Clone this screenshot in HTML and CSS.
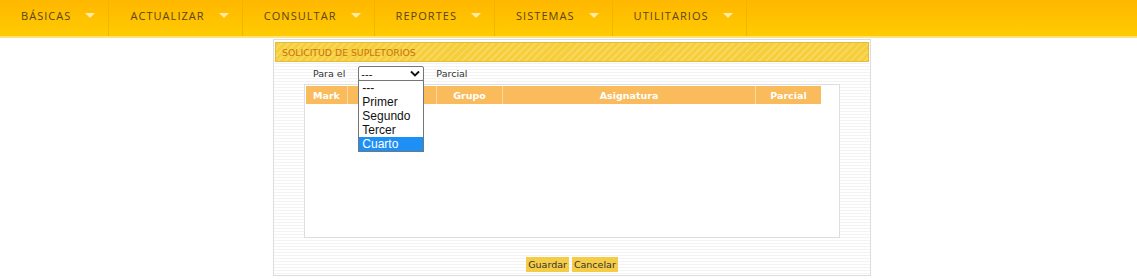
FILE: index.html
```html
<!DOCTYPE html>
<html lang="es">
<head>
    <meta charset="UTF-8">
    <meta name="viewport" content="width=device-width, initial-scale=1.0">
    <title>Solicitud de supletorios</title>
    <link rel="stylesheet" href="styles.css">
</head>
<body>
    <!-- Menu principal -->
    <ul class="menu">
        <li class="menu-item">BÁSICAS <span class="arrow"></span></li>
        <li class="menu-item">ACTUALIZAR <span class="arrow"></span></li>
        <li class="menu-item">CONSULTAR <span class="arrow"></span></li>
        <li class="menu-item">REPORTES <span class="arrow"></span></li>
        <li class="menu-item">SISTEMAS <span class="arrow"></span></li>
        <li class="menu-item">UTILITARIOS <span class="arrow"></span></li>
    </ul>

    <div class="panel">
        <div class="panel-title">SOLICITUD DE SUPLETORIOS</div>

        <div class="filter-row">
            <span class="filter-label">Para el</span>
            <div class="fake-select">
                <span>---</span>
                <svg class="chevron" width="10" height="7" viewBox="0 0 10 7">
                    <path d="M1 1.5 L5 5.5 L9 1.5" fill="none" stroke="#111" stroke-width="1.8"/>
                </svg>
                <ul class="select-list">
                    <li>---</li>
                    <li>Primer</li>
                    <li>Segundo</li>
                    <li>Tercer</li>
                    <li class="selected">Cuarto</li>
                </ul>
            </div>
            <span class="filter-label">Parcial</span>
        </div>

        <div class="grid-box">
            <table class="grid">
                <thead>
                    <tr>
                        <th class="col-mark">Mark</th>
                        <th class="col-curso"></th>
                        <th class="col-grupo">Grupo</th>
                        <th class="col-asig">Asignatura</th>
                        <th class="col-parcial">Parcial</th>
                    </tr>
                </thead>
                <tbody></tbody>
            </table>
        </div>

        <div class="actions">
            <button type="button" class="btn">Guardar</button>
            <button type="button" class="btn">Cancelar</button>
        </div>
    </div>
</body>
</html>
```

FILE: styles.css
```css
/* General */
body {
    margin: 0;
    padding: 0;
    background-color: #fff;
    font-family: "DejaVu Sans", Verdana, sans-serif;
    color: #333;
}

/* Menu */
.menu {
    list-style: none;
    margin: 0;
    padding: 0;
    display: flex;
    height: 36px;
    background: linear-gradient(to bottom, #ffb700, #ffcb00);
    border-bottom: 2px solid #ffe27a;
}

.menu-item {
    display: flex;
    align-items: center;
    padding: 0 13px 6px 21px;
    border-right: 1px solid #f3b400;
    font-family: "Open Sans", sans-serif;
    font-size: 11px;
    letter-spacing: 1.05px;
    color: #5a4418;
}

.arrow {
    display: inline-block;
    margin-left: 14px;
    width: 0;
    height: 0;
    border-left: 5px solid transparent;
    border-right: 5px solid transparent;
    border-top: 5px solid #ffe9a6;
}

/* Panel */
.panel {
    width: 596px;
    margin: 1px 0 0 273px;
    border: 1px solid #dcdcdc;
    background: repeating-linear-gradient(to bottom, #fff 0, #fff 2px, #f3f3f3 2px, #f3f3f3 3px);
    padding-bottom: 3px;
}

.panel-title {
    margin: 2px 1px 1px;
    height: 18px;
    line-height: 19px;
    padding-left: 6px;
    border: 1px solid #e2bd3c;
    background: repeating-linear-gradient(135deg, #f6cd3a 0, #f6cd3a 3px, #f9d75c 3px, #f9d75c 5px);
    font-size: 9.3px;
    color: #c8750a;
}

.filter-row {
    display: flex;
    align-items: center;
    height: 21px;
    padding-left: 39px;
    font-size: 9.5px;
}

.filter-label {
    color: #333;
}

.fake-select {
    position: relative;
    display: flex;
    align-items: center;
    justify-content: space-between;
    width: 60px;
    height: 13px;
    margin: 0 12px 0 13px;
    padding: 0 2px;
    border: 1px solid #767676;
    border-radius: 2px;
    background: #fff;
    font-family: "Liberation Sans", Arial, sans-serif;
    font-size: 11px;
    color: #111;
}

.chevron {
    margin-right: 1px;
}

/* opened list of the select */
.select-list {
    position: absolute;
    top: 13px;
    left: -1px;
    z-index: 5;
    width: 64px;
    margin: 0;
    padding: 0;
    list-style: none;
    border: 1px solid #767676;
    background: #fff;
    font-size: 12px;
    color: #111;
}

.select-list li {
    height: 14px;
    line-height: 14px;
    padding-left: 3px;
}

.select-list li.selected {
    background-color: #1e8ff5;
    color: #fff;
}

/* Grid */
.grid-box {
    height: 152px;
    margin: 0 30px;
    border: 1px solid #dedede;
    background: #fff;
}

.grid {
    width: 515px;
    margin: 1px 0 0 1px;
    border-collapse: collapse;
}

.grid th {
    height: 18px;
    padding: 0;
    background-color: #f9bb5c;
    border-left: 1px solid #fcd8a0;
    font-size: 9.5px;
    font-weight: bold;
    color: #fff;
    text-align: center;
}

.grid th:first-child {
    border-left: none;
}

.col-mark { width: 41px; }
.col-curso { width: 88px; }
.col-grupo { width: 65px; }
.col-asig { width: 252px; }

/* Buttons */
.actions {
    display: flex;
    justify-content: center;
    gap: 3px;
    margin-top: 19px;
}

.btn {
    height: 15px;
    padding: 0 2px;
    border: none;
    background-color: #f5cc46;
    font-family: "DejaVu Sans", Verdana, sans-serif;
    font-size: 9.5px;
    color: #333;
    cursor: pointer;
}

.btn:hover {
    background-color: #eebf2a;
}
```
